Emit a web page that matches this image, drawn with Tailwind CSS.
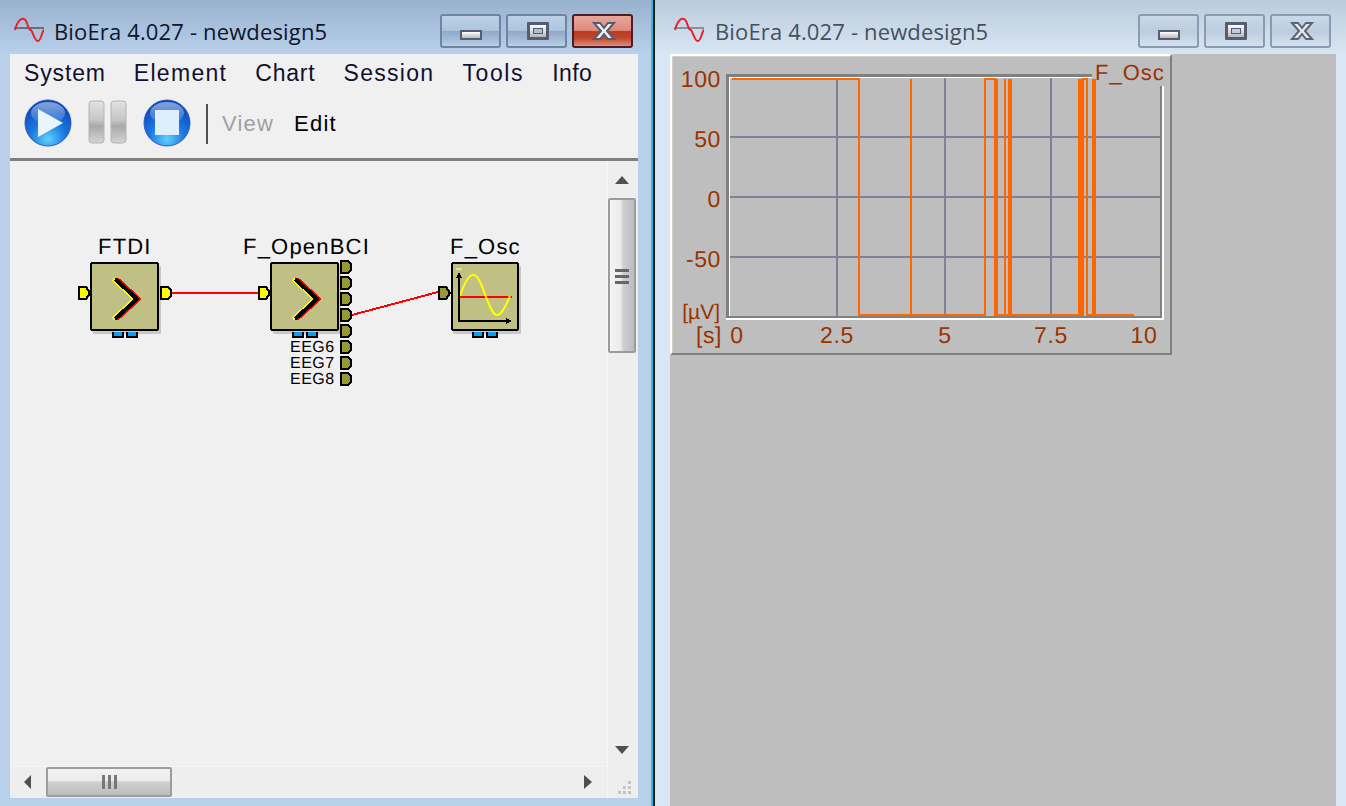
<!DOCTYPE html>
<html lang="en">
<head>
    <meta charset="UTF-8">
    <title>BioEra 4.027 - newdesign5</title>
    <script src="https://cdn.jsdelivr.net/npm/@tailwindcss/browser@4"></script>
</head>
<body class="w-[1346px] h-[806px] overflow-hidden flex font-['Liberation_Sans',sans-serif]">

    <!-- shared svg bits -->
    <svg width="0" height="0" class="absolute">
        <defs>
            <radialGradient id="ball" cx="50%" cy="85%" r="85%">
                <stop offset="0" stop-color="#5fd0ff"/>
                <stop offset="0.45" stop-color="#1a78e0"/>
                <stop offset="1" stop-color="#0a3fb0"/>
            </radialGradient>
            <linearGradient id="shine" x1="0" y1="0" x2="0" y2="1">
                <stop offset="0" stop-color="#ffffff" stop-opacity="0.85"/>
                <stop offset="1" stop-color="#ffffff" stop-opacity="0.1"/>
            </linearGradient>
            <linearGradient id="bar" x1="0" y1="0" x2="0" y2="1">
                <stop offset="0" stop-color="#e2e2e2"/>
                <stop offset="0.45" stop-color="#c6c6c6"/>
                <stop offset="0.6" stop-color="#a8a8a8"/>
                <stop offset="1" stop-color="#d4d4d4"/>
            </linearGradient>
            <g id="chev">
                <polyline points="113,279 135,299 113,319" fill="none" stroke="#ffff00" stroke-width="4"/>
                <polyline points="117,279 139,299 117,319" fill="none" stroke="#ff0000" stroke-width="4"/>
                <polyline points="115,279 137,299 115,319" fill="none" stroke="#000000" stroke-width="4"/>
            </g>
            <g id="tab">
                <rect width="12" height="6" fill="#000"/>
                <rect x="2" width="8" height="4" fill="#109cf0"/>
            </g>
            <path id="outport" d="M1 1H8L11 4V10L8 13H1Z" stroke="#000" stroke-width="2"/>
            <path id="inport" d="M1 1H8L12 7L8 13H1Z" stroke="#000" stroke-width="2"/>
            <path id="sine" d="M1 15C4 4 9 1 12 6C14 9 14 15 17 15C18 15 21 27 24 26C27 26 28 16 30 15" fill="none" stroke="#e8202a" stroke-width="2"/>
        </defs>
    </svg>

    <!-- left window -->
    <section class="w-[651px] h-full flex flex-col bg-[#b8d0ea]">
        <header class="h-[54px] shrink-0 flex items-start pl-[14px] pr-[18px] bg-[linear-gradient(#98b1cd,#b8d0ea)]">
            <svg width="30" height="28" viewBox="0 0 30 28" class="mt-[15px]">
                <path d="M0 13H30" stroke="#555" stroke-width="1.5"/>
                <use href="#sine"/>
            </svg>
            <h1 class="ml-[10px] mt-[17px] text-[22px] leading-[28px] text-[#10142c] font-['Open_Sans',sans-serif] tracking-[0.15px]">BioEra 4.027 - newdesign5</h1>
            <div class="ml-auto mt-[14px] flex gap-[5px]">
                <div class="w-[61px] h-[34px] relative rounded-[3px] border-2 border-[#6f83a3] bg-[linear-gradient(#bcd0e6_0%,#aec5de_48%,#8fa9c6_50%,#a6bdd8_80%,#bbd0e6_100%)]">
                    <div class="absolute left-[18px] top-[14px] w-[22px] h-[10px] border-2 border-[#555d72] bg-[linear-gradient(#ffffff,#b8b8b8)]"></div>
                </div>
                <div class="w-[61px] h-[34px] relative rounded-[3px] border-2 border-[#6f83a3] bg-[linear-gradient(#bcd0e6_0%,#aec5de_48%,#8fa9c6_50%,#a6bdd8_80%,#bbd0e6_100%)]">
                    <div class="absolute left-[19px] top-[6px] w-[22px] h-[18px] border-[3px] border-[#555d72] rounded-[1px] bg-[linear-gradient(#ffffff,#b8b8b8)] flex items-center justify-center">
                        <div class="w-[10px] h-[6px] border border-[#555d72] bg-[#a8bdd6]"></div>
                    </div>
                </div>
                <div class="w-[61px] h-[34px] relative rounded-[3px] border-2 border-[#4a1c2c] bg-[linear-gradient(#eaa69a_0%,#dd8a7c_48%,#b63a20_52%,#c04a30_75%,#e0907e_100%)]">
                    <svg width="24" height="20" viewBox="0 0 24 20" class="absolute left-[18px] top-[5px]">
                        <path d="M2 2H8L12 7L16 2H22L15 10L22 18H16L12 13L8 18H2L9 10Z" fill="#f0f0f0" stroke="#555d72" stroke-width="2"/>
                    </svg>
                </div>
            </div>
        </header>

        <main class="ml-[10px] mr-[13px] mb-[8px] flex-1 min-h-0 flex flex-col bg-[#f0f0f0]">
            <nav class="h-[39px] shrink-0 flex items-center gap-[28px] pl-[14px] text-[23px] text-[#101030]">
                <span class="tracking-[0.85px]">System</span>
                <span class="tracking-[1.3px]">Element</span>
                <span class="tracking-[0.8px]">Chart</span>
                <span class="tracking-[1.3px]">Session</span>
                <span class="tracking-[1.6px]">Tools</span>
                <span class="tracking-[0.4px]">Info</span>
            </nav>
            <div class="h-[68px] shrink-0 flex items-start pl-[14px] border-b-[3px] border-[#7f7f7f]">
                <svg width="48" height="48" viewBox="0 0 48 48" class="mt-[6px]">
                    <circle cx="24" cy="24" r="23" fill="url(#ball)" stroke="#2a5bc0" stroke-width="1"/>
                    <ellipse cx="24" cy="14" rx="17" ry="11" fill="url(#shine)" opacity="0.6"/>
                    <path d="M14 10L39 24L14 38Z" fill="#e8f4ff"/>
                </svg>
                <svg width="40" height="46" viewBox="0 0 40 46" class="ml-[16px] mt-[7px]">
                    <rect x="1" y="1" width="15" height="42" rx="3" fill="url(#bar)" stroke="#b4b4b4"/>
                    <rect x="23" y="1" width="15" height="42" rx="3" fill="url(#bar)" stroke="#b4b4b4"/>
                </svg>
                <svg width="48" height="48" viewBox="0 0 48 48" class="ml-[15px] mt-[6px]">
                    <circle cx="24" cy="24" r="23" fill="url(#ball)" stroke="#2a5bc0" stroke-width="1"/>
                    <ellipse cx="24" cy="14" rx="17" ry="11" fill="url(#shine)" opacity="0.6"/>
                    <rect x="12" y="11" width="24" height="25" fill="#dfeefd"/>
                </svg>
                <div class="w-[2px] h-[40px] ml-[15px] mt-[11px] bg-[#505050]"></div>
                <span class="ml-[14px] mt-[17px] text-[22px] leading-[28px] tracking-[1.2px] text-[#a0a0a0]">View</span>
                <span class="ml-[20px] mt-[17px] text-[22px] leading-[28px] tracking-[1.2px] text-black">Edit</span>
            </div>

            <div class="flex-1 min-h-0 flex">
                <div class="flex-1 min-w-0 flex flex-col">
                    <!-- diagram canvas, viewBox keeps screen coords -->
                    <svg viewBox="10 161 597 605" class="w-[597px] h-[605px] block" shape-rendering="crispEdges">
                        <polyline points="172,293 258,293" stroke="#ff0000" stroke-width="2" fill="none"/>
                        <line x1="352" y1="315" x2="438" y2="292" stroke="#ff0000" stroke-width="2"/>

                        <g font-size="22" letter-spacing="1.2" fill="#000" text-rendering="geometricPrecision">
                            <text x="98" y="254">FTDI</text>
                            <text x="243" y="254">F_OpenBCI</text>
                            <text x="450" y="254">F_Osc</text>
                        </g>

                        <!-- FTDI -->
                        <rect x="93" y="266" width="68" height="68" fill="#c8c8c8"/>
                        <rect x="91" y="263" width="67" height="67" rx="2" fill="#c0c084" stroke="#000" stroke-width="2"/>
                        <use href="#chev"/>
                        <use href="#inport" x="78" y="286" fill="#ffff00"/>
                        <use href="#outport" x="160" y="286" fill="#ffff00"/>
                        <use href="#tab" x="112" y="332"/>
                        <use href="#tab" x="126" y="332"/>

                        <!-- F_OpenBCI -->
                        <rect x="273" y="266" width="68" height="68" fill="#c8c8c8"/>
                        <rect x="271" y="263" width="67" height="67" rx="2" fill="#c0c084" stroke="#000" stroke-width="2"/>
                        <use href="#chev" x="180"/>
                        <use href="#inport" x="258" y="286" fill="#ffff00"/>
                        <use href="#outport" x="340" y="260" fill="#999933"/>
                        <use href="#outport" x="340" y="276" fill="#999933"/>
                        <use href="#outport" x="340" y="292" fill="#999933"/>
                        <use href="#outport" x="340" y="308" fill="#999933"/>
                        <use href="#outport" x="340" y="324" fill="#999933"/>
                        <use href="#outport" x="340" y="340" fill="#999933"/>
                        <use href="#outport" x="340" y="356" fill="#999933"/>
                        <use href="#outport" x="340" y="372" fill="#999933"/>
                        <use href="#tab" x="292" y="332"/>
                        <use href="#tab" x="306" y="332"/>
                        <g font-size="16" letter-spacing="0.5" fill="#000" text-rendering="geometricPrecision">
                            <text x="290" y="352">EEG6</text>
                            <text x="290" y="368">EEG7</text>
                            <text x="290" y="384">EEG8</text>
                        </g>

                        <!-- F_Osc -->
                        <rect x="453" y="266" width="68" height="68" fill="#c8c8c8"/>
                        <rect x="452" y="263" width="66" height="67" rx="2" fill="#c0c084" stroke="#000" stroke-width="2"/>
                        <rect x="456" y="268" width="6" height="2" fill="#e0e0a0"/>
                        <use href="#inport" x="438" y="286" fill="#999933"/>
                        <path d="M460 297H512" stroke="#ff0000" stroke-width="2"/>
                        <path d="M460 296C464 284 468 275 473 275C479 275 482 287 486 297C490 307 493 315 497 315C502 315 506 305 510 296" fill="none" stroke="#ffff00" stroke-width="2" shape-rendering="auto"/>
                        <path d="M459 274V321H508" fill="none" stroke="#000" stroke-width="2"/>
                        <path d="M456 278H462L459 272Z M506 318V324L512 321Z" fill="#000"/>
                        <use href="#tab" x="472" y="332"/>
                        <use href="#tab" x="486" y="332"/>
                    </svg>

                    <!-- horizontal scrollbar -->
                    <div class="h-[32px] shrink-0 flex items-start bg-[#eeeeee] border-t border-[#f6f6f6]">
                        <div class="w-[36px] h-[30px] flex items-center justify-center">
                            <svg width="8" height="14" viewBox="0 0 8 14"><path d="M7 0V14L0 7Z" fill="#505050"/></svg>
                        </div>
                        <div class="w-[126px] h-[30px] flex items-center justify-center rounded-[2px] border-2 border-[#9c9c9c] bg-[linear-gradient(#f2f2f2_0%,#ebebeb_45%,#cfcfcf_50%,#bdbdbd_100%)]">
                            <svg width="16" height="14" viewBox="0 0 16 14"><path d="M1 0H4V14H1Z M7 0H10V14H7Z M13 0H16V14H13Z" fill="#777"/></svg>
                        </div>
                        <div class="flex-1 h-[30px] flex items-center justify-end pr-[15px]">
                            <svg width="8" height="14" viewBox="0 0 8 14"><path d="M0 0V14L8 7Z" fill="#505050"/></svg>
                        </div>
                    </div>
                </div>

                <!-- vertical scrollbar + grip -->
                <div class="w-[31px] shrink-0 flex flex-col bg-[#eeeeee] border-l border-[#f6f6f6]">
                    <div class="h-[37px] shrink-0 flex items-center justify-center pr-[2px]">
                        <svg width="14" height="8" viewBox="0 0 14 8"><path d="M0 8H14L7 0Z" fill="#505050"/></svg>
                    </div>
                    <div class="w-[28px] h-[155px] shrink-0 flex items-center justify-center rounded-[2px] border-2 border-[#9c9c9c] bg-[linear-gradient(90deg,#f4f4f4_0%,#ebebeb_45%,#cfcfd2_55%,#bcbcc0_100%)]">
                        <svg width="14" height="16" viewBox="0 0 14 16"><path d="M0 1H14V4H0Z M0 7H14V10H0Z M0 13H14V16H0Z" fill="#666"/></svg>
                    </div>
                    <div class="flex-1 min-h-0"></div>
                    <div class="h-[33px] shrink-0 flex items-center justify-center pr-[2px]">
                        <svg width="14" height="8" viewBox="0 0 14 8"><path d="M0 0H14L7 8Z" fill="#505050"/></svg>
                    </div>
                    <div class="h-[32px] shrink-0 flex items-end justify-end pr-[6px] pb-[3px]">
                        <svg width="14" height="14" viewBox="0 0 14 14"><path d="M10 0H13V3H10Z M5 5H8V8H5Z M10 5H13V8H10Z M0 10H3V13H0Z M5 10H8V13H5Z M10 10H13V13H10Z" fill="#c4c4c4"/></svg>
                    </div>
                </div>
            </div>
        </main>
    </section>

    <!-- gap between the windows -->
    <div class="w-[2px] h-full bg-[#22bfe0]"></div>
    <div class="w-[2px] h-full bg-[#181818]"></div>

    <!-- right window -->
    <section class="flex-1 h-full flex flex-col bg-[#d9e6f4]">
        <header class="h-[54px] shrink-0 flex items-start pl-[19px] pr-[15px] bg-[linear-gradient(#b9cbdb,#d9e6f4)]">
            <svg width="30" height="28" viewBox="0 0 30 28" class="mt-[15px]">
                <path d="M0 13H30" stroke="#777" stroke-width="1.5"/>
                <use href="#sine"/>
            </svg>
            <h2 class="ml-[11px] mt-[17px] text-[22px] leading-[28px] text-[#46505e] font-['Open_Sans',sans-serif] tracking-[0.15px]">BioEra 4.027 - newdesign5</h2>
            <div class="ml-auto mt-[14px] flex gap-[5px]">
                <div class="w-[61px] h-[34px] relative rounded-[3px] border-2 border-[#8a9ab5] bg-[linear-gradient(#cad9e8,#bccde0_50%,#d4e1ef)]">
                    <div class="absolute left-[18px] top-[14px] w-[22px] h-[10px] border-2 border-[#555d72] bg-[linear-gradient(#ffffff,#b8b8b8)]"></div>
                </div>
                <div class="w-[61px] h-[34px] relative rounded-[3px] border-2 border-[#8a9ab5] bg-[linear-gradient(#cad9e8,#bccde0_50%,#d4e1ef)]">
                    <div class="absolute left-[19px] top-[6px] w-[22px] h-[18px] border-[3px] border-[#555d72] rounded-[1px] bg-[linear-gradient(#ffffff,#b8b8b8)] flex items-center justify-center">
                        <div class="w-[10px] h-[6px] border border-[#555d72] bg-[#bccde0]"></div>
                    </div>
                </div>
                <div class="w-[61px] h-[34px] relative rounded-[3px] border-2 border-[#8a9ab5] bg-[linear-gradient(#cad9e8,#bccde0_50%,#d4e1ef)]">
                    <svg width="24" height="20" viewBox="0 0 24 20" class="absolute left-[18px] top-[5px]">
                        <path d="M2 2H8L12 7L16 2H22L15 10L22 18H16L12 13L8 18H2L9 10Z" fill="#e8e8e8" stroke="#5c6478" stroke-width="2"/>
                    </svg>
                </div>
            </div>
        </header>

        <main class="ml-[15px] mr-[10px] flex-1 min-h-0 bg-[#bebebe]">
            <div class="w-[502px] h-[301px] border-2 border-t-white border-l-white border-r-[#808080] border-b-[#808080]">
                <svg viewBox="672 56 498 297" class="w-[498px] h-[297px] block" shape-rendering="crispEdges">
                    <path d="M672 56.5H1170M672.5 56V353" stroke="#d4d0c8"/>
                    <!-- plot frame -->
                    <path d="M726 74H1092V77H729V316H1160V86H1162V318H726Z" fill="#808080"/>
                    <path d="M729 77H1092V78H730V316H729Z M726 318H1164V320H726Z M1162 86H1164V318H1162Z" fill="#ffffff"/>
                    <!-- grid -->
                    <path d="M730 137H1160M730 197H1160M730 257H1160M837 78V316M945 78V316M1051 78V316" stroke="#808098" stroke-width="2"/>
                    <!-- trace -->
                    <path d="M732 79H859V315H911V79V315H985V79H995V315H997V79V315H1005V79V315H1009V79V315H1011V79V315H1079V79V315H1081V79V315H1083V79H1087V315H1093V79V315H1095V79V315H1134" fill="none" stroke="#ff6600" stroke-width="2"/>
                    <!-- labels -->
                    <g font-size="23" fill="#993300" letter-spacing="0.6" text-rendering="geometricPrecision">
                        <g text-anchor="end">
                            <text x="721" y="87">100</text>
                            <text x="721" y="147">50</text>
                            <text x="721" y="207">0</text>
                            <text x="721" y="267">-50</text>
                            <text x="720" y="319" font-size="21" letter-spacing="0">[µV]</text>
                            <text x="722" y="343">[s]</text>
                        </g>
                        <g text-anchor="middle">
                            <text x="737" y="343">0</text>
                            <text x="837" y="343">2.5</text>
                            <text x="945" y="343">5</text>
                            <text x="1051" y="343">7.5</text>
                            <text x="1144" y="343">10</text>
                        </g>
                        <text x="1095" y="80" font-size="22" letter-spacing="1">F_Osc</text>
                    </g>
                </svg>
            </div>
        </main>
    </section>
</body>
</html>
